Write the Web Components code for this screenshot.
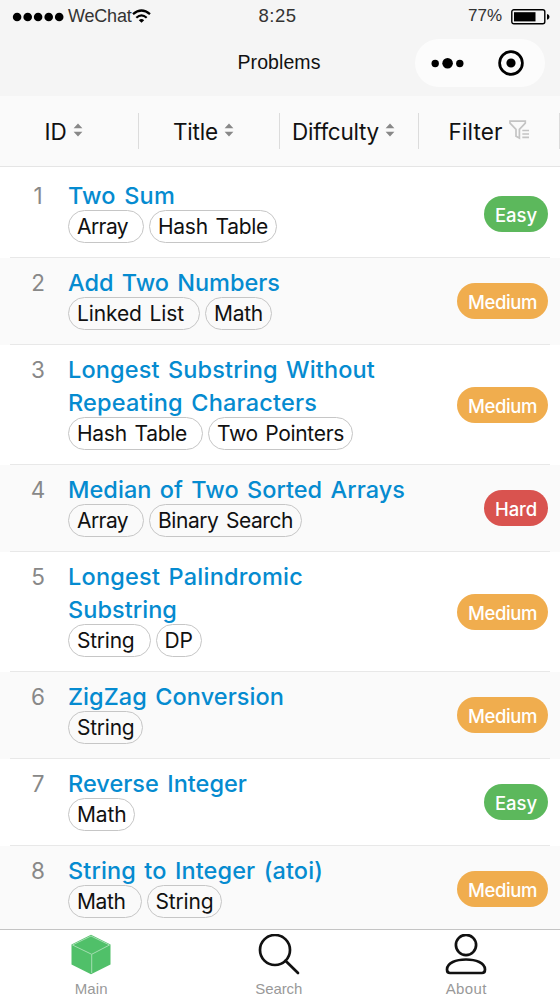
<!DOCTYPE html>
<html lang="en">
<head>
<meta charset="utf-8">
<title>Problems</title>
<style>
    body {
        margin: 0;
        background: #fff;
        font-family: Inter, "Liberation Sans", sans-serif;
        color: #111;
    }
</style>
</head>
<body>
<problem-app></problem-app>

<script>
// A single line of text, tracked to a given width in pixels
class FitText extends HTMLElement {
    constructor() {
        super();
        this.attachShadow({ mode: 'open' });
        this.shadowRoot.innerHTML = `
            <style>
                :host { display: inline-block; white-space: nowrap; }
                span { display: inline-block; }
            </style>
            <span><slot></slot></span>
        `;
    }

    connectedCallback() {
        const span = this.shadowRoot.querySelector('span');
        const target = Number(this.getAttribute('width'));
        const count = this.textContent.length;
        if (!target || !count) return;
        const natural = span.getBoundingClientRect().width;
        span.style.letterSpacing = `${(target - natural) / count}px`;
    }
}

class StatusBar extends HTMLElement {
    constructor() {
        super();
        this.attachShadow({ mode: 'open' });
        this.shadowRoot.innerHTML = `
            <style>
                :host {
                    display: grid;
                    grid-template-columns: 1fr auto 1fr;
                    height: 30px;
                    padding: 0 11px 0 12px;
                    box-sizing: border-box;
                    align-items: center;
                    background: #f5f5f5;
                    font: 18px/30px "Liberation Sans", Arial, sans-serif;
                    color: #333;
                }
                div { display: flex; align-items: center; }
                .time { font-size: 18.5px; margin: 0 3px 0 -3px; }
                .right { justify-content: flex-end; gap: 9px; font-size: 17px; }
                .right fit-text { margin-top: 1px; }
                svg { display: block; flex: none; }
                .right svg { margin: 3px -2px 0 0; }
                .dots { margin: 2px 4px 0 0; }
            </style>
            <div>
                <svg class="dots" width="52" height="10" viewBox="0 0 52 10">
                    <circle cx="5.1" cy="5" r="4.3"/><circle cx="15.7" cy="5" r="4.3"/>
                    <circle cx="26.1" cy="5" r="4.3"/><circle cx="36.7" cy="5" r="4.3"/>
                    <circle cx="47.2" cy="5" r="4.3"/>
                </svg>
                <fit-text width="63.5">WeChat</fit-text>
                <svg width="19" height="14" viewBox="0 0 19 14" fill="none" stroke="#000" stroke-width="2.2">
                    <path d="M1 5.2Q9.5-2.2 18 5.2M4.3 8.8Q9.5 4 14.7 8.8"/>
                    <path d="M6.8 11.2Q9.5 9 12.2 11.2L9.5 13.8Z" fill="#000" stroke="none"/>
                </svg>
            </div>
            <fit-text class="time" width="38">8:25</fit-text>
            <div class="right">
                <fit-text width="34">77%</fit-text>
                <svg width="40" height="16" viewBox="0 0 40 16">
                    <rect x=".8" y=".8" width="33" height="14" rx="2" fill="none" stroke="#000" stroke-width="1.4"/>
                    <rect x="3" y="3.2" width="21.5" height="9.2"/>
                    <path d="M36 5.2H37Q40 7.8 37 10.4H36Z"/>
                </svg>
            </div>
        `;
    }
}

class NavBar extends HTMLElement {
    constructor() {
        super();
        this.attachShadow({ mode: 'open' });
        this.shadowRoot.innerHTML = `
            <style>
                :host {
                    display: grid;
                    grid-template-columns: 1fr auto 1fr;
                    height: 66px;
                    padding: 0 15px 1px 13px;
                    box-sizing: border-box;
                    align-items: center;
                    background: #f5f5f5;
                    font: 19.5px/26px "Liberation Sans", Arial, sans-serif;
                    color: #111;
                }
                .title { margin-top: -2px; }
                .capsule {
                    display: grid;
                    grid-template-columns: 1fr 1fr;
                    place-items: center;
                    justify-self: end;
                    width: 130px;
                    height: 48px;
                    padding-right: 2px;
                    box-sizing: border-box;
                    border-radius: 24px;
                    background: #fcfcfc;
                }
                .capsule svg { display: block; }
            </style>
            <i></i>
            <fit-text class="title" width="83">Problems</fit-text>
            <div class="capsule">
                <svg width="34" height="12" viewBox="0 0 34 12">
                    <circle cx="5.2" cy="6.5" r="3.7"/><circle cx="17.6" cy="6.3" r="5.3"/><circle cx="29.8" cy="6.5" r="3.7"/>
                </svg>
                <svg width="26" height="26" viewBox="0 0 26 26">
                    <circle cx="13" cy="13" r="11.4" fill="none" stroke="#000" stroke-width="2.7"/>
                    <circle cx="13" cy="13" r="4.6"/>
                </svg>
            </div>
        `;
    }
}

class SortHeader extends HTMLElement {
    constructor() {
        super();
        this.attachShadow({ mode: 'open' });
        this.shadowRoot.innerHTML = `
            <style>
                :host {
                    display: flex;
                    align-items: center;
                    justify-content: center;
                    gap: 6px;
                    height: 36px;
                    padding-right: 11px;
                    border-right: 1px solid #dcdcdc;
                    box-sizing: border-box;
                }
                :host([kind="filter"]) { padding-right: 0; gap: 6px; }
                :host([kind="filter"]) .sort, .filter { display: none; }
                :host([kind="filter"]) .filter { display: block; }
                svg { display: block; flex: none; }
                .sort { margin-top: -3px; }
                .filter { margin-top: -2px; }
            </style>
            <slot></slot>
            <svg class="sort" width="10" height="14" viewBox="0 0 10 14" fill="#888">
                <path d="M.6 5.3L5 .6 9.4 5.3ZM.6 8.7L5 13.4 9.4 8.7Z"/>
            </svg>
            <svg class="filter" width="21" height="20" viewBox="0 0 21 20" fill="none" stroke="#c4c4c4" stroke-width="1.7">
                <path d="M1 1.2H16.3V3.2L10.4 9.3V18L7 16.2V9.3L1 3.2Z"/>
                <path d="M13.3 10.5H20M13.3 14H20M13.3 17.4H20"/>
            </svg>
        `;
    }
}

class ProblemRow extends HTMLElement {
    constructor() {
        super();
        this.attachShadow({ mode: 'open' });
        this.shadowRoot.innerHTML = `
            <style>
                :host {
                    display: grid;
                    grid-template-columns: 68px 1fr auto;
                    padding: 8px 12px 15px 0;
                    box-sizing: border-box;
                    background: linear-gradient(#e8e8e8, #e8e8e8) 10px 100% / 540px 1px no-repeat;
                }
                :host(:nth-child(even)) { background-color: #fafafa; }
                .number {
                    width: 76px;
                    text-align: center;
                    font-size: 22.5px;
                    line-height: 33px;
                    color: #888;
                }
                .tags { display: flex; gap: 5px; margin-top: -2px; }
                ::slotted(problem-level) { align-self: center; margin: 6px 0 0; }
            </style>
            <div class="number"></div>
            <div class="main">
                <slot name="title"></slot>
                <div class="tags"><slot name="tag"></slot></div>
            </div>
            <slot name="level"></slot>
        `;
    }

    connectedCallback() {
        this.shadowRoot.querySelector('.number').textContent = this.getAttribute('number');
    }
}

class ProblemTitle extends HTMLElement {
    constructor() {
        super();
        this.attachShadow({ mode: 'open' });
        this.shadowRoot.innerHTML = `
            <style>
                :host {
                    display: flex;
                    flex-direction: column;
                    align-items: flex-start;
                    font-size: 23.5px;
                    font-weight: 550;
                    line-height: 33px;
                    word-spacing: 2px;
                    color: #058bd0;
                }
            </style>
            <slot></slot>
        `;
    }
}

class ProblemTag extends HTMLElement {
    constructor() {
        super();
        this.attachShadow({ mode: 'open' });
        this.shadowRoot.innerHTML = `
            <style>
                :host {
                    display: block;
                    height: 33px;
                    padding: 0 7.5px 0 8px;
                    border: 1px solid #c6c6c6;
                    border-radius: 17px;
                    box-sizing: border-box;
                    font-size: 21px;
                    line-height: 32px;
                    word-spacing: 2px;
                }
                /* a tag followed by another one keeps the width of a space */
                :host([spaced]) { padding-right: 15px; }
            </style>
            <slot></slot>
        `;
    }
}

class ProblemLevel extends HTMLElement {
    constructor() {
        super();
        this.attachShadow({ mode: 'open' });
        this.shadowRoot.innerHTML = `
            <style>
                :host {
                    display: block;
                    height: 36px;
                    padding: 0 11px;
                    border-radius: 18px;
                    background: #f0ad4e;
                    box-sizing: border-box;
                    font-size: 18.5px;
                    font-weight: 500;
                    line-height: 38px;
                    color: #fff;
                }
                :host([level="Easy"]) { background: #5cb85c; }
                :host([level="Hard"]) { background: #d9534f; }
            </style>
            <slot></slot>
        `;
    }
}

class TabItem extends HTMLElement {
    constructor() {
        super();
        this.attachShadow({ mode: 'open' });
        this.shadowRoot.innerHTML = `
            <style>
                :host {
                    display: flex;
                    flex-direction: column;
                    align-items: center;
                    padding-top: 4px;
                    font: 15px/18px "Liberation Sans", Arial, sans-serif;
                    color: #999;
                }
                ::slotted(svg) { display: block; margin-bottom: 5px; }
            </style>
            <slot></slot>
        `;
    }
}

const problems = [
    { title: [['Two Sum', 107]], tags: [['Array', 51], ['Hash Table', 110]], level: 'Easy' },
    { title: [['Add Two Numbers', 212]], tags: [['Linked List', 107], ['Math', 49]], level: 'Medium' },
    { title: [['Longest Substring Without', 307], ['Repeating Characters', 249]], tags: [['Hash Table', 110], ['Two Pointers', 127]], level: 'Medium' },
    { title: [['Median of Two Sorted Arrays', 337]], tags: [['Array', 51], ['Binary Search', 135]], level: 'Hard' },
    { title: [['Longest Palindromic', 235], ['Substring', 109]], tags: [['String', 57.5], ['DP', 28.5]], level: 'Medium' },
    { title: [['ZigZag Conversion', 216]], tags: [['String', 57.5]], level: 'Medium' },
    { title: [['Reverse Integer', 179]], tags: [['Math', 49.5]], level: 'Easy' },
    { title: [['String to Integer (atoi)', 255]], tags: [['Math', 48.5], ['String', 58]], level: 'Medium' }
];

const levelWidths = { Easy: 42, Medium: 69, Hard: 42 };

const fit = ([text, width]) => `<fit-text width="${width}">${text}</fit-text>`;

class ProblemApp extends HTMLElement {
    constructor() {
        super();
        this.attachShadow({ mode: 'open' });
        const rows = problems.map((p, i) => `
            <problem-row number="${i + 1}">
                <problem-title slot="title">${p.title.map(fit).join('')}</problem-title>
                ${p.tags.map((t, n) => `<problem-tag slot="tag" ${n < p.tags.length - 1 ? 'spaced' : ''}>${fit(t)}</problem-tag>`).join('')}
                <problem-level slot="level" level="${p.level}">${fit([p.level, levelWidths[p.level]])}</problem-level>
            </problem-row>
        `).join('');

        this.shadowRoot.innerHTML = `
            <style>
                :host {
                    display: flex;
                    flex-direction: column;
                    width: 560px;
                    height: 1000px;
                    overflow: hidden;
                }
                header {
                    display: grid;
                    grid-template-columns: 139px 141px 139px 141px;
                    align-items: center;
                    height: 71px;
                    box-sizing: border-box;
                    border-bottom: 1px solid #e5e5e5;
                    background: #fafafa;
                    font-size: 22.5px;
                }
                main { flex: 1; min-height: 0; padding-top: 4px; overflow: hidden; }
                nav {
                    display: grid;
                    grid-template-columns: repeat(3, 187.5px);
                    height: 71px;
                    margin-right: -1px;
                    box-sizing: border-box;
                    border-top: 1px solid #c4c4c4;
                    background: #fff;
                }
                tab-item { margin-left: -5px; }
            </style>
            <status-bar></status-bar>
            <nav-bar></nav-bar>
            <header>
                <sort-header>${fit(['ID', 22])}</sort-header>
                <sort-header>${fit(['Title', 45])}</sort-header>
                <sort-header>${fit(['Diffculty', 87])}</sort-header>
                <sort-header kind="filter">${fit(['Filter', 54])}</sort-header>
            </header>
            <main>${rows}</main>
            <nav>
                <tab-item>
                    <svg width="40" height="41" viewBox="0 0 40 41">
                        <path d="M20 .8L39.5 10.5V30.5L20 40.3.5 30.5V10.5Z" fill="#50c069"/>
                        <path d="M1.5 11L20.7 20.3 38.5 11M20.7 20.3V39M1.5 11L20 2 38.5 11" fill="none" stroke="#a3deb0"/>
                    </svg>
                    ${fit(['Main', 33])}
                </tab-item>
                <tab-item>
                    <svg width="42" height="41" viewBox="0 0 42 41" fill="none" stroke="#111" stroke-width="2.7" stroke-linecap="round">
                        <circle cx="17" cy="16" r="15"/><path d="M27.5 26.7L40 39"/>
                    </svg>
                    ${fit(['Search', 47])}
                </tab-item>
                <tab-item>
                    <svg width="42" height="41" viewBox="0 0 42 41" fill="none" stroke="#111" stroke-width="2.7">
                        <circle cx="21" cy="11" r="10.1"/>
                        <path d="M5 39H37Q40 39 40 35.5C40 29 31 25.5 21 25.5S2 29 2 35.5Q2 39 5 39Z"/>
                    </svg>
                    ${fit(['About', 41])}
                </tab-item>
            </nav>
        `;
    }
}

customElements.define('fit-text', FitText);
customElements.define('status-bar', StatusBar);
customElements.define('nav-bar', NavBar);
customElements.define('sort-header', SortHeader);
customElements.define('problem-row', ProblemRow);
customElements.define('problem-title', ProblemTitle);
customElements.define('problem-tag', ProblemTag);
customElements.define('problem-level', ProblemLevel);
customElements.define('tab-item', TabItem);
customElements.define('problem-app', ProblemApp);
</script>
</body>
</html>
